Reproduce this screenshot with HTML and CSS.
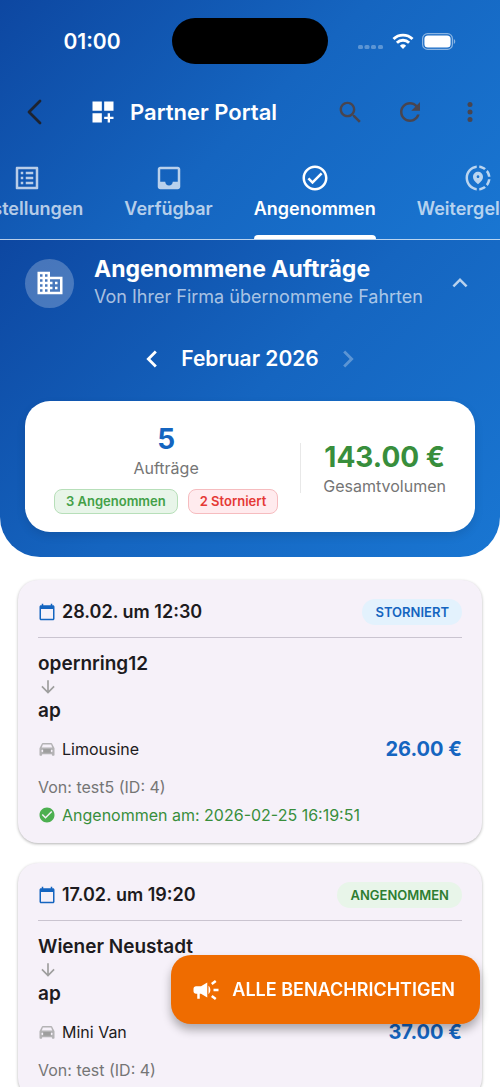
FILE: index.html
```html
<!DOCTYPE html>
<html lang="de">
<head>
<meta charset="utf-8">
<meta name="viewport" content="width=device-width, initial-scale=1">
<title>Partner Portal</title>
<link rel="stylesheet" href="styles.css">
</head>
<body>
<svg class="sprite" aria-hidden="true">
  <symbol id="calendar" viewBox="0 0 24 24"><path d="M20 3h-1V1h-2v2H7V1H5v2H4c-1.1 0-2 .9-2 2v16c0 1.1.9 2 2 2h16c1.1 0 2-.9 2-2V5c0-1.1-.9-2-2-2zm0 18H4V8h16v13z"/></symbol>
  <symbol id="down" viewBox="0 0 24 24"><path d="M20 12l-1.41-1.41L13 16.17V4h-2v12.17l-5.58-5.59L4 12l8 8 8-8z"/></symbol>
  <symbol id="car" viewBox="0 0 24 24"><path opacity=".75" fill-rule="evenodd" d="M18.92 5.010C18.720 4.420 18.160 4 17.500 4h-11c-.66 0-1.210.42-1.420 1.010L2 11v9c0 .55.45 1 1 1h1.500c.55 0 1-.45 1-1v-1h13v1c0 .55.45 1 1 1H21c.55 0 1-.45 1-1v-9l-3.080-5.990zM6.500 6h11l1.500 4H5l1.500-4zM6 13a1.500 1.500 0 1 1 0 3 1.500 1.500 0 0 1 0-3zm12 0a1.500 1.500 0 1 1 0 3 1.500 1.500 0 0 1 0-3z"/><path d="M7 12h10v5H7z"/></symbol>
  <symbol id="check" viewBox="0 0 24 24"><path d="M12 2C6.480 2 2 6.480 2 12s4.480 10 10 10 10-4.480 10-10S17.520 2 12 2zm-2 15l-5-5 1.410-1.410L10 14.170l7.590-7.590L19 8l-9 9z"/></symbol>
</svg>
<div class="app">
  <header class="top">
    <div class="status">
      <span class="time">01:00</span>
      <span class="island"></span>
      <span class="signals">
        <svg width="26" height="6" viewBox="0 0 26 6" class="dots"><rect x="0" y="1" width="5" height="4" rx="1.500"/><rect x="6.500" y="1" width="5" height="4" rx="1.500"/><rect x="13" y="1" width="5" height="4" rx="1.500"/><rect x="20" y="1" width="5" height="4" rx="1.500"/></svg>
        <svg width="22" height="18" viewBox="0 0 22 18"><path fill="none" stroke="currentColor" stroke-width="2.900" d="M1.500 7a13.500 13.500 0 0 1 19 0M4.900 10.700a8.700 8.700 0 0 1 12.200 0"/><path d="M11 17l-3.100-3.300a4.500 4.500 0 0 1 6.200 0z"/></svg>
        <svg width="34" height="17" viewBox="0 0 34 17"><rect x=".6" y=".6" width="29.800" height="15.800" rx="5" fill="none" stroke="#fff" stroke-opacity=".5" stroke-width="1.200"/><rect x="2.400" y="2.400" width="26.200" height="12.200" rx="3.500" fill="#fff"/><path d="M31.800 6v5c1.900-.8 1.900-4.200 0-5z" fill="#fff" fill-opacity=".5"/></svg>
      </span>
    </div>
    <div class="toolbar">
      <button class="tool" aria-label="Zurück"><svg width="30" height="30" viewBox="0 0 30 30"><path fill="none" stroke="#1d2330" stroke-width="2.800" stroke-linecap="round" stroke-linejoin="round" d="M20 4L9 15l11 11"/></svg></button>
      <svg class="logo" width="28" height="28" viewBox="0 0 24 24"><path d="M3 3h8v8H3zM13 3h8v8h-8zM3 13h8v8H3zM18 13h-2v3h-3v2h3v3h2v-3h3v-2h-3z"/></svg>
      <h1 class="title">Partner Portal</h1>
      <button class="tool" aria-label="Suchen"><svg width="29" height="29" viewBox="0 0 24 24"><path d="M15.500 14h-.79l-.28-.27C15.410 12.590 16 11.110 16 9.500 16 5.910 13.090 3 9.500 3S3 5.910 3 9.500 5.910 16 9.500 16c1.610 0 3.090-.59 4.230-1.570l.27.28v.79l5 4.990L20.490 19l-4.990-5zm-6 0C7.010 14 5 11.990 5 9.500S7.010 5 9.500 5 14 7.010 14 9.500 11.990 14 9.500 14z"/></svg></button>
      <button class="tool" aria-label="Aktualisieren"><svg width="30" height="30" viewBox="0 0 24 24"><path d="M17.650 6.350C16.200 4.900 14.210 4 12 4c-4.420 0-7.990 3.580-7.990 8s3.570 8 7.990 8c3.730 0 6.840-2.550 7.730-6h-2.080c-.82 2.330-3.040 4-5.650 4-3.310 0-6-2.690-6-6s2.690-6 6-6c1.660 0 3.140.69 4.220 1.780L13 11h7V4l-2.350 2.350z"/></svg></button>
      <button class="tool" aria-label="Mehr"><svg width="30" height="30" viewBox="0 0 24 24"><circle cx="12" cy="6" r="2"/><circle cx="12" cy="12" r="2"/><circle cx="12" cy="18" r="2"/></svg></button>
    </div>
    <nav class="tabs">
      <button class="tab"><svg width="30" height="30" viewBox="0 0 24 24"><path d="M11 7h6v2h-6V7zm0 4h6v2h-6v-2zm0 4h6v2h-6v-2zM7 7h2v2H7zm0 4h2v2H7zm0 4h2v2H7zM20.100 3H3.900c-.5 0-.9.4-.9.9v16.200c0 .4.4.9.9.9h16.200c.4 0 .9-.5.9-.9V3.900c0-.5-.5-.9-.9-.9zM19 19H5V5h14v14z"/></svg>Bestellungen</button>
      <button class="tab"><svg width="30" height="30" viewBox="0 0 24 24"><path d="M19 3H4.990c-1.110 0-1.980.89-1.980 2L3 19c0 1.100.88 2 1.990 2H19c1.100 0 2-.9 2-2V5c0-1.110-.9-2-2-2zm0 12h-4c0 1.660-1.350 3-3 3s-3-1.340-3-3H4.990V5H19v10z"/></svg>Verfügbar</button>
      <button class="tab active" aria-current="page"><svg width="30" height="30" viewBox="0 0 24 24"><path d="M16.590 7.580L10 14.170l-2.590-2.580L6 13l4 4 8-8zM12 2C6.480 2 2 6.480 2 12s4.480 10 10 10 10-4.480 10-10S17.520 2 12 2zm0 18c-4.420 0-8-3.580-8-8s3.580-8 8-8 8 3.580 8 8-3.580 8-8 8z"/></svg>Angenommen</button>
      <button class="tab"><svg width="30" height="30" viewBox="0 0 24 24"><path d="M13.020 19.930v2.020c2.010-.2 3.840-1 5.320-2.210l-1.420-1.430c-1.110.86-2.440 1.440-3.900 1.620zM4.030 12c0-4.050 3.030-7.410 6.950-7.930V2.050C5.950 2.580 2.030 6.840 2.030 12s3.920 9.420 8.950 9.950v-2.020c-3.920-.52-6.950-3.880-6.950-7.930zM19.950 11h2.020c-.2-2.010-1-3.840-2.210-5.320l-1.430 1.430c.86 1.100 1.440 2.430 1.620 3.890zM18.340 4.260c-1.480-1.210-3.320-2.010-5.320-2.210v2.020c1.460.18 2.790.76 3.900 1.620l1.420-1.430zM18.330 16.900l1.430 1.420c1.210-1.480 2.010-3.310 2.210-5.320h-2.020c-.18 1.460-.76 2.790-1.620 3.900zM16 11.100C16 8.610 14.100 7 12 7s-4 1.610-4 4.100c0 1.660 1.330 3.630 4 5.900 2.670-2.270 4-4.240 4-5.900zm-4 .9c-.59 0-1.070-.48-1.070-1.070 0-.59.48-1.070 1.070-1.070s1.070.48 1.070 1.070c0 .59-.48 1.070-1.070 1.070z"/></svg>Weitergeleitet</button>
    </nav>
  </header>

  <section class="overview">
    <div class="intro">
      <span class="avatar"><svg width="30" height="30" viewBox="0 0 24 24"><path d="M12 7V3H2v18h20V7H12zM6 19H4v-2h2v2zm0-4H4v-2h2v2zm0-4H4V9h2v2zm0-4H4V5h2v2zm4 12H8v-2h2v2zm0-4H8v-2h2v2zm0-4H8V9h2v2zm0-4H8V5h2v2zm10 12h-8v-2h2v-2h-2v-2h2v-2h-2V9h8v10zm-2-8h-2v2h2v-2zm0 4h-2v2h2v-2z"/></svg></span>
      <div class="intro-text">
        <h2 class="heading">Angenommene Aufträge</h2>
        <p class="sub">Von Ihrer Firma übernommene Fahrten</p>
      </div>
      <button class="collapse" aria-label="Einklappen"><svg width="30" height="30" viewBox="0 0 24 24"><path d="M12 8l-6 6 1.410 1.410L12 10.830l4.590 4.580L18 14z"/></svg></button>
    </div>
    <div class="month">
      <button class="step" aria-label="Voriger Monat"><svg width="34" height="34" viewBox="0 0 24 24"><path d="M15.410 7.410L14 6l-6 6 6 6 1.410-1.410L10.830 12z"/></svg></button>
      <span class="month-name">Februar 2026</span>
      <button class="step" aria-label="Nächster Monat" disabled><svg width="34" height="34" viewBox="0 0 24 24"><path d="M10 6L8.590 7.410 13.170 12l-4.580 4.590L10 18l6-6z"/></svg></button>
    </div>
    <div class="summary">
      <div class="stat">
        <strong class="figure">5</strong>
        <span class="caption">Aufträge</span>
        <div class="pills"><span class="pill ok">3 Angenommen</span><span class="pill bad">2 Storniert</span></div>
      </div>
      <div class="rule"></div>
      <div class="stat">
        <strong class="figure green">143.00 €</strong>
        <span class="caption">Gesamtvolumen</span>
      </div>
    </div>
  </section>

  <main class="list">
    <article class="card">
      <div class="card-head">
        <svg class="blue" width="18" height="18"><use href="#calendar"/></svg>
        <span class="date">28.02. um 12:30</span>
        <span class="badge cancelled">STORNIERT</span>
      </div>
      <div class="route">
        <span class="place">opernring12</span>
        <svg class="grey" width="20" height="20"><use href="#down"/></svg>
        <span class="place">ap</span>
      </div>
      <div class="vehicle">
        <svg class="grey" width="18" height="18"><use href="#car"/></svg>
        <span class="car-name">Limousine</span>
        <span class="price">26.00 €</span>
      </div>
      <p class="from">Von: test5 (ID: 4)</p>
      <p class="accepted"><svg width="18" height="18"><use href="#check"/></svg>Angenommen am: 2026-02-25 16:19:51</p>
    </article>
    <article class="card">
      <div class="card-head">
        <svg class="blue" width="18" height="18"><use href="#calendar"/></svg>
        <span class="date">17.02. um 19:20</span>
        <span class="badge taken">ANGENOMMEN</span>
      </div>
      <div class="route">
        <span class="place">Wiener Neustadt</span>
        <svg class="grey" width="20" height="20"><use href="#down"/></svg>
        <span class="place">ap</span>
      </div>
      <div class="vehicle">
        <svg class="grey" width="18" height="18"><use href="#car"/></svg>
        <span class="car-name">Mini Van</span>
        <span class="price">37.00 €</span>
      </div>
      <p class="from">Von: test (ID: 4)</p>
    </article>
  </main>
  <button class="notify"><svg width="30" height="30" viewBox="0 0 24 24"><path d="M18 11v2h4v-2h-4zM16 17.610c.96.71 2.210 1.650 3.200 2.390.4-.53.8-1.070 1.200-1.600-.99-.74-2.240-1.680-3.200-2.400-.4.54-.8 1.080-1.200 1.610zM20.400 5.600c-.4-.53-.8-1.070-1.200-1.600-.99.74-2.240 1.680-3.200 2.400.4.53.8 1.070 1.200 1.600.96-.72 2.210-1.650 3.200-2.400zM4 9c-1.100 0-2 .9-2 2v2c0 1.100.9 2 2 2h1v4h2v-4h1l5 3V6L8 9H4zM15.500 12c0-1.330-.58-2.530-1.500-3.350v6.690c.92-.81 1.500-2.010 1.500-3.340z"/></svg>ALLE BENACHRICHTIGEN</button>
</div>
</body>
</html>
```
FILE: styles.css
```css
* { box-sizing: border-box; }
body { margin: 0; font-family: Inter, "Liberation Sans", sans-serif; color: #1d1b20; background: #fff; }
h1, h2, p { margin: 0; }
button { border: 0; padding: 0; background: none; font: inherit; color: inherit; }
svg { display: block; flex: none; fill: currentColor; }
.sprite { display: none; }
.app { display: flex; flex-direction: column; height: 100vh; overflow: hidden; }

.top { flex: none; color: #fff; background: linear-gradient(135deg, #0d47a1, #1565c0 50%, #1976d2); }
.status { display: grid; grid-template-columns: 1fr 156px 1fr; align-items: center; height: 82px; }
.time { padding-left: 12px; text-align: center; font-size: 21px; font-weight: 600; }
.island { height: 46px; border-radius: 23px; background: #000; }
.signals { display: flex; align-items: center; justify-content: center; gap: 8px; padding-right: 14px; }
.dots { opacity: .3; align-self: flex-end; }
.toolbar { display: flex; align-items: center; height: 60px; padding-left: 5px; }
.tool { display: grid; place-items: center; width: 60px; height: 60px; color: #49454f; }
.logo { margin-left: 24px; }
.title { flex: 1; margin-left: 13px; font-size: 22px; line-height: 28px; font-weight: 600; white-space: nowrap; }
.tabs { display: flex; justify-content: center; gap: 41px; height: 98px; padding-left: 8px; border-bottom: 1px solid rgba(255, 255, 255, .7); overflow: hidden; }
.tab { display: flex; flex: none; flex-direction: column; align-items: center; justify-content: flex-start; gap: 5px; padding-top: 21px; font-size: 18px; line-height: 22px; font-weight: 600; color: rgba(255, 255, 255, .7); }
.tab::after { content: ""; align-self: stretch; height: 4px; margin-top: 10px; border-radius: 4px 4px 0 0; }
.active { color: #fff; }
.active::after { background: #fff; }

.overview { flex: none; padding: 15px 25px 25px; border-radius: 0 0 40px 40px; color: #fff; background: linear-gradient(135deg, #0d47a1, #1565c0 50%, #1976d2); }
.intro { display: flex; align-items: center; gap: 20px; }
.avatar { display: grid; place-items: center; width: 49px; height: 49px; border-radius: 50%; background: rgba(255, 255, 255, .24); }
.intro-text { flex: 1; white-space: nowrap; }
.heading { font-size: 23px; line-height: 28px; font-weight: 700; }
.sub { font-size: 18px; line-height: 28px; color: rgba(255, 255, 255, .65); }
.collapse { color: rgba(255, 255, 255, .7); }
.month { display: flex; align-items: center; justify-content: center; gap: 12px; height: 60px; margin: 18px 0 12px; }
.month-name { font-size: 21px; line-height: 28px; font-weight: 600; }
.step:disabled { color: rgba(255, 255, 255, .3); }
.summary { display: flex; align-items: center; justify-content: space-between; padding: 20px 29px 18px; border-radius: 25px; background: #fff; box-shadow: 0 4px 10px rgba(0, 0, 0, .1); }
.stat { display: flex; flex-direction: column; align-items: center; white-space: nowrap; }
.figure { font-size: 28px; line-height: 36px; font-weight: 700; color: #1565c0; }
.green { color: #388e3c; }
.caption { font-size: 16px; line-height: 22px; color: #757575; }
.pills { display: flex; gap: 10px; margin-top: 10px; }
.pill { padding: 0 11px; border: 1px solid; border-radius: 8px; font-size: 13px; line-height: 23px; font-weight: 600; }
.ok { color: #43a047; background: #e8f5e9; border-color: #b7dfb9; }
.bad { color: #e53935; background: #ffebee; border-color: #f6bcbf; }
.rule { width: 1px; height: 50px; background: #e8e8e8; }

.list { flex: 1; min-height: 0; padding: 23px 18px; overflow: hidden; }
.card { margin-bottom: 20px; padding: 19px 20px 16px; border-radius: 20px; background: #f6f1f9; box-shadow: 0 1px 3px rgba(0, 0, 0, .3); }
.card-head { display: flex; align-items: center; gap: 6px; padding-bottom: 12px; border-bottom: 1px solid #cac4d0; }
.blue { color: #1565c0; }
.grey { color: #9e9e9e; }
.date { flex: 1; font-size: 18px; line-height: 26px; font-weight: 600; }
.badge { padding: 0 13px; border-radius: 13px; font-size: 13px; line-height: 26px; font-weight: 600; }
.cancelled { color: #1565c0; background: #e3f2fd; }
.taken { color: #2e7d32; background: #e8f5e9; }
.route { display: flex; flex-direction: column; align-items: flex-start; gap: 1px; padding-top: 13px; }
.place { font-size: 19px; line-height: 25px; font-weight: 600; }
.vehicle { display: flex; align-items: center; gap: 6px; margin-top: 11px; line-height: 30px; }
.car-name { flex: 1; font-size: 16px; }
.price { font-size: 20px; font-weight: 700; color: #1565c0; }
.from { margin-top: 11px; font-size: 16px; line-height: 24px; color: #757575; }
.accepted { display: flex; align-items: center; gap: 6px; margin-top: 4px; font-size: 16px; line-height: 24px; color: #388e3c; }
.accepted svg { color: #4caf50; }
.notify { position: fixed; right: 20px; bottom: 63px; display: flex; align-items: center; gap: 11px; height: 69px; padding: 0 25px 0 20px; border-radius: 20px; font-size: 18px; font-weight: 600; color: #fff; background: #ef6c00; box-shadow: 0 6px 10px rgba(0, 0, 0, .3); }
```
